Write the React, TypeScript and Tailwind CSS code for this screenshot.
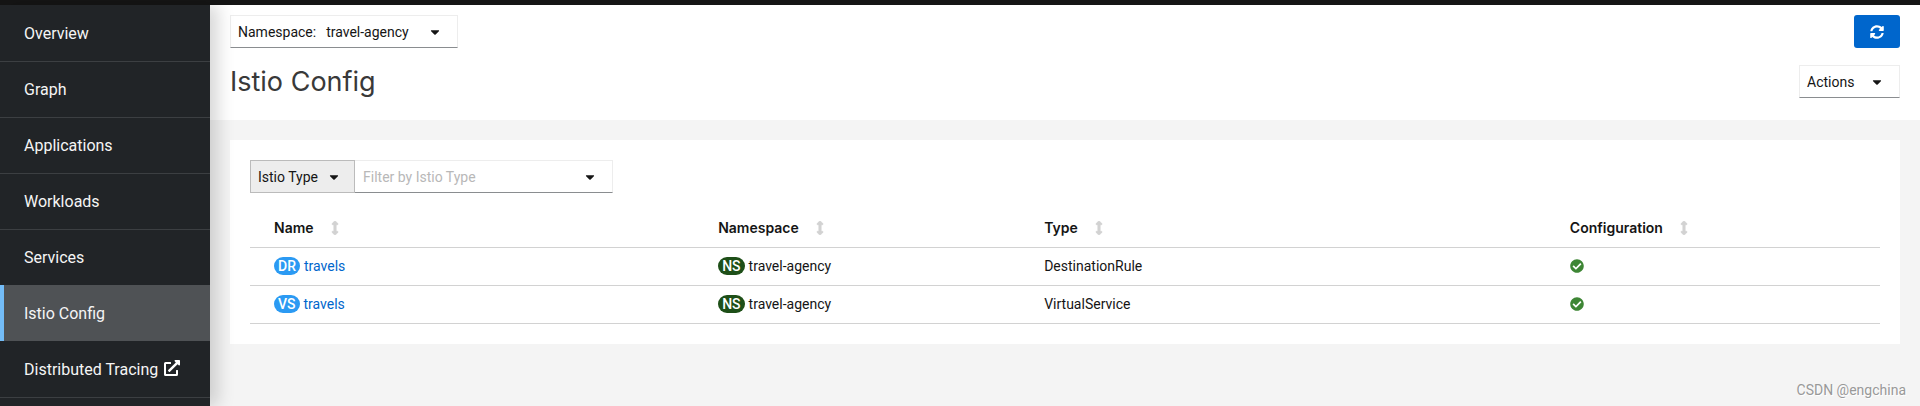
import { FaArrowsAltV, FaCaretDown, FaCheckCircle, FaExternalLinkAlt, FaSyncAlt } from "react-icons/fa";

const navBefore = ["Overview", "Graph", "Applications", "Workloads", "Services"];

const columns = [
  { label: "Name", width: "w-[27.25%]" },
  { label: "Namespace", width: "w-[20%]" },
  { label: "Type", width: "w-[32.25%]" },
  { label: "Configuration", width: "w-auto" },
];

const rows = [
  { badge: "DR", name: "travels", namespace: "travel-agency", type: "DestinationRule" },
  { badge: "VS", name: "travels", namespace: "travel-agency", type: "VirtualService" },
];

const toggle =
  "flex h-[33px] items-center whitespace-nowrap border border-[#ededed] border-b-[#8a8d90] bg-white pl-[7px] pr-[15px] text-sm text-[#151515]";

function Sidebar() {
  const item = "flex h-14 items-center whitespace-nowrap border-t px-6 text-base text-[#f5f5f5]";
  return (
    <nav
      aria-label="Main"
      className="relative z-10 w-[210px] shrink-0 bg-[#212427] shadow-[8px_0_16px_rgba(3,3,3,0.16)]"
    >
      <ul>
        {navBefore.map((label, i) => (
          <li key={label}>
            <a href="#" className={`${item} ${i === 0 ? "border-transparent" : "border-[#3c3f42]"}`}>
              {label}
            </a>
          </li>
        ))}
        <li>
          <a
            href="#"
            aria-current="page"
            className="flex h-14 items-center border-l-4 border-[#73bcf7] bg-[#4f5255] pl-5 pr-6 pt-px text-base text-[#f5f5f5]"
          >
            Istio Config
          </a>
        </li>
        <li className="border-b border-[#3c3f42]">
          <a href="#" className={`${item} gap-1.5 border-transparent`}>
            Distributed Tracing
            <FaExternalLinkAlt className="mb-1 size-4 shrink-0 text-white" />
          </a>
        </li>
      </ul>
    </nav>
  );
}

function Badge({ text, color }: { text: string; color: string }) {
  return (
    <span className={`mr-1 inline-flex h-[18px] items-center rounded-full px-1 text-sm font-medium text-white ${color}`}>
      {text}
    </span>
  );
}

export default function App() {
  return (
    <div className="flex min-h-screen flex-col bg-[#f4f4f4] font-['Roboto',sans-serif] text-[#151515]">
      <div className="h-[5px] bg-[#151515]" />
      <div className="flex flex-1">
        <Sidebar />
        <div className="flex min-w-0 flex-1 flex-col">
          <header className="bg-white px-5 pb-[22px] pt-2.5">
            <div className="flex items-center justify-between">
              <button type="button" className={`${toggle} w-[228px]`}>
                <span>Namespace:</span>
                <span className="ml-2.5">travel-agency</span>
                <FaCaretDown className="ml-auto size-3.5" />
              </button>
              <button
                type="button"
                aria-label="Refresh"
                className="flex h-[33px] w-[46px] items-center justify-center rounded-[3px] bg-[#0066cc] text-white"
              >
                <FaSyncAlt className="size-3.5" />
              </button>
            </div>
            <div className="mt-[17px] flex items-center justify-between">
              <h1 className="font-['Inter',sans-serif] text-[27px] leading-8 text-[#393939]">Istio Config</h1>
              <button type="button" className={`${toggle} w-[101px]`}>
                Actions
                <FaCaretDown className="ml-auto size-3.5" />
              </button>
            </div>
          </header>
          <main className="m-5 bg-white p-5">
            <div className="flex">
              <div className="relative">
                <select
                  aria-label="Filter type"
                  className="h-[33px] w-[105px] appearance-none border border-[#bbbbbb] bg-[#ededed] px-[7px] text-sm"
                >
                  <option>Istio Type</option>
                </select>
                <FaCaretDown className="pointer-events-none absolute right-3.5 top-2.5 size-3.5" />
              </div>
              <div className="flex h-[33px] w-[258px] items-center border border-l-0 border-[#ededed] border-b-[#8a8d90]">
                <input
                  type="text"
                  aria-label="Filter by Istio Type"
                  placeholder="Filter by Istio Type"
                  className="h-full min-w-0 flex-1 pl-2 text-sm outline-none placeholder:text-[#b8b8b8]"
                />
                <button type="button" aria-label="Show options" className="px-[15px]">
                  <FaCaretDown className="size-3.5" />
                </button>
              </div>
            </div>
            <table className="mt-4 w-full table-fixed border-collapse text-left text-sm">
              <thead>
                <tr className="h-[38px] border-b border-[#d2d2d2]">
                  {columns.map((c) => (
                    <th key={c.label} scope="col" className={`${c.width} py-0 pl-6 font-['Inter',sans-serif] font-semibold`}>
                      <button type="button" className="flex items-center gap-3.5">
                        {c.label}
                        <FaArrowsAltV className="size-3.5 stroke-[#d2d2d2] stroke-[30] text-[#d2d2d2]" />
                      </button>
                    </th>
                  ))}
                </tr>
              </thead>
              <tbody>
                {rows.map((r) => (
                  <tr key={r.badge} className="h-[38px] border-b border-[#d2d2d2]">
                    <td className="pl-6">
                      <div className="flex items-center">
                        <Badge text={r.badge} color="bg-[#2b9af3]" />
                        <a href="#" className="text-[#0066cc]">{r.name}</a>
                      </div>
                    </td>
                    <td className="pl-6">
                      <div className="flex items-center">
                        <Badge text="NS" color="bg-[#1e4f18]" />
                        {r.namespace}
                      </div>
                    </td>
                    <td className="pl-6">{r.type}</td>
                    <td className="pl-6">
                      <FaCheckCircle role="img" aria-label="Valid" className="size-3.5 text-[#3e8635]" />
                    </td>
                  </tr>
                ))}
              </tbody>
            </table>
          </main>
          <footer className="mt-auto px-3.5 pb-1.5 text-right text-sm text-[#999999] [text-shadow:1px_1px_0_#ffffff]">
            CSDN @engchina
          </footer>
        </div>
      </div>
    </div>
  );
}
